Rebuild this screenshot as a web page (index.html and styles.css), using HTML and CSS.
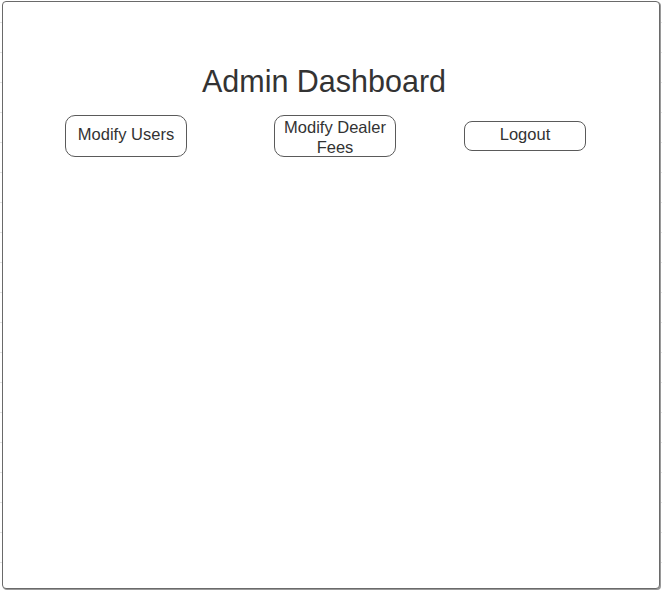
FILE: index.html
```html
<!DOCTYPE html>
<html lang="en">
<head>
<meta charset="utf-8">
<title>Admin Dashboard</title>
<link rel="stylesheet" href="styles.css">
</head>
<body>
<div class="frame">
  <h1 class="title">Admin Dashboard</h1>
  <div class="actions">
    <div class="btn btn-tall btn-users">Modify Users</div>
    <div class="btn btn-tall btn-fees">Modify Dealer Fees</div>
    <div class="btn btn-short btn-logout">Logout</div>
  </div>
</div>
</body>
</html>
```
FILE: styles.css
```css
html, body {
  margin: 0;
  padding: 0;
  background: #ffffff;
}
body {
  width: 662px;
  height: 590px;
  overflow: hidden;
  font-family: "Liberation Sans", Arial, sans-serif;
  color: #333333;
  background-image:
    repeating-linear-gradient(to bottom, transparent 0 22px, #e2e2e2 22px 23px, transparent 23px 30px),
    repeating-linear-gradient(to bottom, transparent 0 22px, #e2e2e2 22px 23px, transparent 23px 30px);
  background-size: 2px 100%, 1px 100%;
  background-position: 0 0, 661px 0;
  background-repeat: no-repeat;
}
.frame {
  box-sizing: border-box;
  margin: 1px 0 0 2px;
  width: 658px;
  height: 588px;
  border: 1.5px solid #6a6a6a;
  border-radius: 4px;
  box-shadow: 1px 1px 0 #9a9a9a;
  background: #ffffff;
  display: flex;
  flex-direction: column;
}
.title {
  margin: 62px 0 0 0;
  padding-right: 14px;
  font-size: 30.5px;
  font-weight: normal;
  line-height: 34px;
  text-align: center;
  color: #333333;
}
.actions {
  margin-top: 17px;
  padding-left: 62px;
  display: flex;
  align-items: center;
  height: 42px;
}
.btn {
  box-sizing: border-box;
  width: 122px;
  border: 1.7px solid #5a5a5a;
  border-radius: 10px;
  display: flex;
  align-items: center;
  justify-content: center;
  text-align: center;
  font-size: 16.5px;
  line-height: 20px;
  color: #333333;
  padding: 0 4px 5px 4px;
}
.btn-tall {
  height: 42px;
}
.btn-short {
  height: 30px;
  border-radius: 8px;
  padding-bottom: 4px;
}
.btn-fees {
  margin-left: 87px;
  padding: 2px 4px 0 4px;
  line-height: 20.5px;
}
.btn-logout {
  margin-left: 68px;
}
```
